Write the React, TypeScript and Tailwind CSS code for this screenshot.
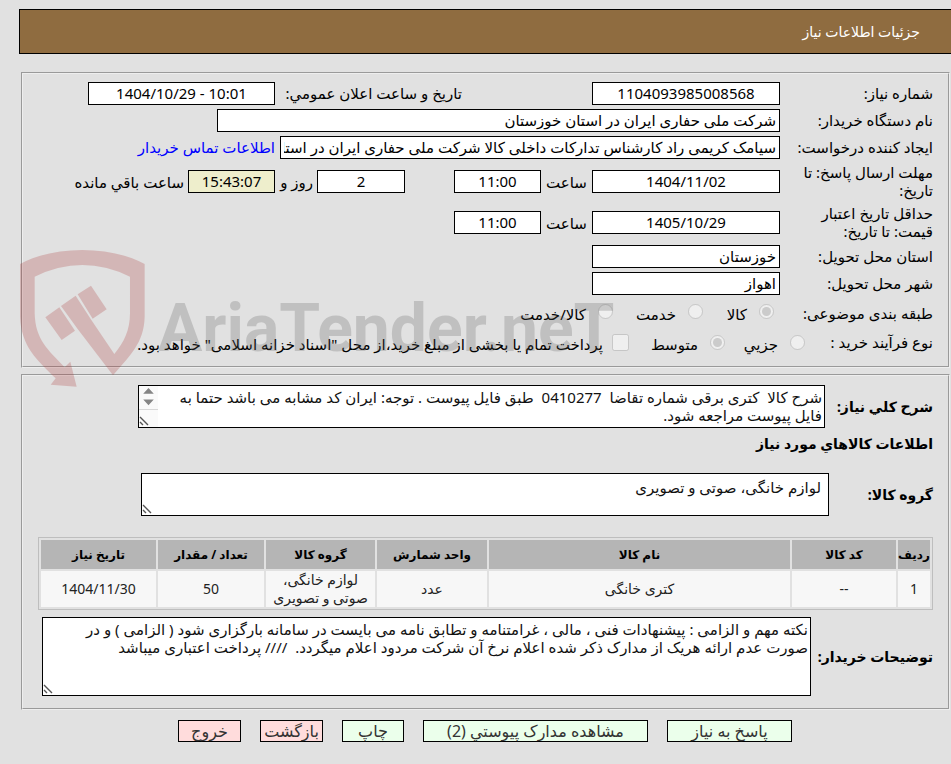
import type { ReactNode } from "react";

const box = "h-[23px] border border-black px-[3px] pb-[2px] text-[15px] leading-[18px] text-black outline-none";
const panel = "border-2 border-[#eeeeee] [border-style:groove]";

const columns = [
  { title: "ردیف", value: "1", width: "w-[32px]" },
  { title: "کد کالا", value: "--", width: "w-[104px]" },
  { title: "نام کالا", value: "کتری خانگی", width: "" },
  { title: "واحد شمارش", value: "عدد", width: "w-[110px]" },
  { title: "گروه کالا", value: "لوازم خانگی، صوتی و تصویری", width: "w-[109px]" },
  { title: "تعداد / مقدار", value: "50", width: "w-[106px]" },
  { title: "تاریخ نیاز", value: "1404/11/30", width: "w-[115px]" },
];

const actions = [
  { text: "پاسخ به نياز", style: "w-[125px] bg-[#ebffeb]" },
  { text: "مشاهده مدارک پيوستي (2)", style: "w-[225px] bg-[#ebffeb]" },
  { text: "چاپ", style: "w-[62px] bg-[#ebffeb]" },
  { text: "بازگشت", style: "w-[63px] bg-[#ffdcdc]" },
  { text: "خروج", style: "w-[63px] bg-[#ffdcdc]" },
];

function Row({ id, label, tall, children }: { id: string; label: string; tall?: boolean; children: ReactNode }) {
  return (
    <div className={tall ? "flex h-[41px] items-center" : "flex h-[27px] items-center"}>
      <label htmlFor={id} className="w-[153px] shrink-0 pb-[2px] pl-3 leading-[18px]">
        {label}
      </label>
      {children}
    </div>
  );
}

function Choice({ name, label, checked }: { name: string; label: string; checked?: boolean }) {
  return (
    <label className="flex items-center gap-3 whitespace-nowrap">
      <input type="radio" name={name} defaultChecked={checked} disabled className="mb-[4px] h-[15px] w-[15px]" />
      {label}
    </label>
  );
}

function TextArea({ id, text, size, scroll }: { id: string; text: string; size: string; scroll?: boolean }) {
  return (
    <div className={`relative border border-black bg-white ${size}`}>
      <textarea
        id={id}
        readOnly
        defaultValue={text}
        className="block h-full w-full resize-none overflow-hidden text-[15px] leading-[18px] text-[#111] outline-none"
      />
      {scroll && (
        <div className="absolute top-0 left-0 h-full w-[19px] bg-[#fafafa]">
          <svg viewBox="0 0 19 24" className="h-[24px] w-[19px] border-b border-[#d8d8d8]" fill="#858585">
            <path d="M4 8L9.500 2L15 8ZM4 14H15L9.500 20Z" />
          </svg>
        </div>
      )}
      <svg viewBox="0 0 10 10" className="absolute bottom-[1px] left-0 h-[10px] w-[10px]" fill="none" stroke="#555" strokeWidth="1.400">
        <path d="M1 1L9 9M1 6L4 9" />
      </svg>
    </div>
  );
}

function Watermark() {
  return (
    <svg
      aria-hidden="true"
      viewBox="0 0 600 140"
      className="pointer-events-none absolute top-[250px] left-[20px] h-[140px] w-[600px] opacity-[0.24]"
    >
      <g fill="#ab3232" transform="scale(0.3333)">
        <path d="M0 42C100 -14 274 -14 374 42V200C372 280 330 315 279 376L173 237L123 168L167 137L214 210L283 312C312 278 330 240 330 190V80Q187 10 44 80V190C46 270 85 300 134 352L151 335L170 410L92 404L107 385C50 328 4 290 0 200Z" />
        <path d="M76 202L118 172L165 242L125 270ZM173 133L213 107L260 178L218 206Z" />
      </g>
      <text x="138" y="101" direction="ltr" fill="#5c5c5c" className="text-[66px] font-bold [font-family:Roboto,sans-serif]">
        AriaTender.neT
      </text>
    </svg>
  );
}

export default function App() {
  return (
    <div
      dir="rtl"
      lang="fa"
      className="relative min-h-screen overflow-hidden bg-[#e1e1e1] pt-[9px] pb-[22px] text-[15px] leading-[18px] text-black [font-family:'Noto_Sans','DejaVu_Sans',sans-serif]"
    >
      <header className="ml-[19px] flex h-[45px] items-center border-y border-l border-black bg-[#8f6c40] pr-[31px] text-sm text-white">
        <h1>جزئیات اطلاعات نیاز</h1>
      </header>

      {/* Request details */}
      <section className={`${panel} mt-[18px] mr-[1px] ml-[21px] h-[296px] pt-[6px] pr-[15px]`}>
        <Row id="number" label="شماره نیاز:">
          <input id="number" readOnly defaultValue="1104093985008568" className={`${box} w-[188px] bg-white text-center`} />
          <label htmlFor="announced" className="mr-[130px] w-[187px] pb-[2px] whitespace-nowrap">
            تاریخ و ساعت اعلان عمومي:
          </label>
          <input id="announced" readOnly dir="ltr" defaultValue="1404/10/29 - 10:01" className={`${box} w-[187px] bg-white text-center`} />
        </Row>
        <Row id="buyer" label="نام دستگاه خریدار:">
          <input id="buyer" readOnly defaultValue="شرکت ملی حفاری ایران در استان خوزستان" className={`${box} w-[563px] bg-white`} />
        </Row>
        <Row id="creator" label="ایجاد کننده درخواست:">
          <input
            id="creator"
            readOnly
            defaultValue="سیامک کریمی راد کارشناس تدارکات داخلی کالا شرکت ملی حفاری ایران در استان خوزستان"
            className={`${box} w-[500px] bg-white`}
          />
          <a href="#contact" className="mr-[5px] pb-[2px] whitespace-nowrap text-[#0000ff]">
            اطلاعات تماس خریدار
          </a>
        </Row>
        <Row id="deadline" label="مهلت ارسال پاسخ: تا تاریخ:" tall>
          <input id="deadline" readOnly defaultValue="1404/11/02" className={`${box} w-[188px] bg-white text-center`} />
          <label htmlFor="deadline-hour" className="w-[51px] text-center">ساعت</label>
          <input id="deadline-hour" readOnly defaultValue="11:00" className={`${box} w-[87px] bg-white text-center`} />
          <input id="days" readOnly defaultValue="2" className={`${box} mr-[49px] w-[88px] bg-white text-center`} />
          <label htmlFor="days" className="w-[42px] pr-1">روز و</label>
          <input id="left" readOnly defaultValue="15:43:07" className={`${box} w-[87px] bg-[#eeeecc] text-center`} />
          <label htmlFor="left" className="mr-1 whitespace-nowrap">ساعت باقي مانده</label>
        </Row>
        <Row id="valid" label="حداقل تاریخ اعتبار قیمت: تا تاریخ:" tall>
          <input id="valid" readOnly defaultValue="1405/10/29" className={`${box} w-[188px] bg-white text-center`} />
          <label htmlFor="valid-hour" className="w-[51px] text-center">ساعت</label>
          <input id="valid-hour" readOnly defaultValue="11:00" className={`${box} w-[87px] bg-white text-center`} />
        </Row>
        <Row id="province" label="استان محل تحویل:">
          <input id="province" readOnly defaultValue="خوزستان" className={`${box} w-[188px] bg-white`} />
        </Row>
        <Row id="city" label="شهر محل تحویل:">
          <input id="city" readOnly defaultValue="اهواز" className={`${box} w-[188px] bg-white`} />
        </Row>
        <div role="group" aria-label="طبقه بندی موضوعی" className="flex h-[33px] items-center">
          <span className="w-[159px] shrink-0 pb-[2px]">طبقه بندی موضوعی:</span>
          <div className="grid grid-cols-[71px_90px_100px]">
            <Choice name="subject" label="کالا" checked />
            <Choice name="subject" label="خدمت" />
            <Choice name="subject" label="کالا/خدمت" />
          </div>
        </div>
        <div role="group" aria-label="نوع فرآیند خرید" className="flex h-[28px] items-center">
          <span className="w-[128px] shrink-0 pb-[4px]">نوع فرآیند خرید :</span>
          <div className="grid grid-cols-[80px_96px_auto]">
            <Choice name="process" label="جزیي" />
            <Choice name="process" label="متوسط" checked />
            <label className="flex items-center gap-[9px] whitespace-nowrap">
              <input type="checkbox" disabled className="mb-[4px] h-[17px] w-[17px]" />
              پرداخت تمام یا بخشی از مبلغ خرید،از محل "اسناد خزانه اسلامی" خواهد بود.
            </label>
          </div>
        </div>
      </section>

      {/* Goods */}
      <section className={`${panel} mt-[6px] mr-[1px] ml-[21px] h-[336px] pt-[9px] pr-[15px] pl-[15px]`}>
        <div className="flex items-center">
          <label htmlFor="summary" className="w-[108px] shrink-0 text-sm font-bold whitespace-nowrap">شرح کلي نياز:</label>
          <TextArea
            id="summary"
            text="شرح کالا  کتری برقی شماره تقاضا  0410277  طبق فایل پیوست . توجه: ایران کد مشابه می باشد حتما به فایل پیوست مراجعه شود."
            size="h-[43px] w-[687px] pt-[2px] pr-[2px] pl-[20px]"
            scroll
          />
        </div>
        <h2 className="mt-[7px] text-sm leading-[18px] font-bold">اطلاعات کالاهاي مورد نياز</h2>
        <div className="mt-[20px] flex items-center">
          <label htmlFor="group" className="w-[104px] shrink-0 text-sm font-bold whitespace-nowrap">گروه کالا:</label>
          <TextArea id="group" text="لوازم خانگی، صوتی و تصویری" size="h-[43px] w-[688px] px-[7px] py-[4px]" />
        </div>
        <table className="mt-[21px] w-full table-fixed border-separate border-spacing-[2px] border border-[#bebebe] text-center text-sm leading-[18px] text-[#222]">
          <thead>
            <tr className="h-[29px] bg-[#b5b5b5] text-xs text-black">
              {columns.map((c) => (
                <th key={c.title} scope="col" className={`${c.width} whitespace-nowrap`}>{c.title}</th>
              ))}
            </tr>
          </thead>
          <tbody>
            <tr className="h-[36px] bg-[#f7f7f7] leading-[18px]">
              {columns.map((c) => (
                <td key={c.title} className="px-1">{c.value}</td>
              ))}
            </tr>
          </tbody>
        </table>
        <div className="mt-[7px] flex items-center">
          <label htmlFor="notes" className="w-[122px] shrink-0 text-sm font-bold whitespace-nowrap">توضیحات خریدار:</label>
          <TextArea
            id="notes"
            text="نکته مهم و الزامی : پیشنهادات فنی ، مالی ، غرامتنامه و تطابق نامه می بایست در سامانه بارگزاری شود ( الزامی ) و در صورت عدم ارائه هریک از مدارک ذکر شده اعلام نرخ آن شرکت مردود اعلام میگردد.  //// پرداخت اعتباری میباشد"
            size="h-[79px] w-[769px] px-[2px] py-[2px]"
          />
        </div>
      </section>

      <div className="mt-[10px] flex gap-[19px] pr-[159px]">
        {actions.map((a) => (
          <button key={a.text} type="button" className={`${a.style} h-[22px] border border-black text-base leading-[18px] whitespace-nowrap text-[#333]`}>
            {a.text}
          </button>
        ))}
      </div>

      <Watermark />
    </div>
  );
}
